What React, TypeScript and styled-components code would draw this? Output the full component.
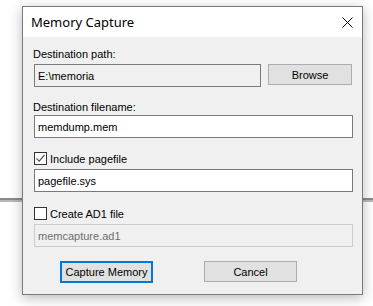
import React from "react";
import styled, { createGlobalStyle } from "styled-components";

const Global = createGlobalStyle`
  html, body { margin: 0; padding: 0; background: #ffffff; }
  body { font-family: "Liberation Sans", Arial, sans-serif; }
`;

const Page = styled.div`
  width: 373px;
  height: 306px;
  box-sizing: border-box;
  padding: 6px 0 0 22px;
  overflow: hidden;
  background: linear-gradient(
    to bottom,
    transparent 198px,
    #8a8a8a 198px,
    #8a8a8a 200px,
    #b9b9b9 200px,
    #b9b9b9 202px,
    transparent 202px
  );
`;

const Window = styled.div`
  width: 341px;
  height: 289px;
  box-sizing: border-box;
  border: 1px solid #7a7a7a;
  background: #f0f0f0;
  box-shadow: 0 3px 12px rgba(0, 0, 0, 0.28);
  display: flex;
  flex-direction: column;
`;

const TitleBar = styled.div`
  height: 30px;
  background: #ffffff;
  display: flex;
  align-items: center;
  justify-content: space-between;
  padding: 0 0 0 8px;
  font-family: "Noto Sans", "Liberation Sans", sans-serif;
  font-size: 13px;
  color: #000;
`;

const CloseBox = styled.div`
  width: 30px;
  height: 30px;
  display: flex;
  align-items: center;
  justify-content: center;
`;

const Body = styled.div`
  flex: 1;
  display: flex;
  flex-direction: column;
  padding: 10px 9px 0 11px;
  font-size: 11px;
  color: #000;
`;

const Label = styled.div<{ $mt?: number }>`
  height: 14px;
  line-height: 14px;
  margin-top: ${(p) => p.$mt ?? 0}px;
  margin-left: -1px;
`;

const Row = styled.div<{ $mt?: number }>`
  display: flex;
  align-items: flex-start;
  gap: 7px;
  margin-top: ${(p) => p.$mt ?? 0}px;
`;

const Field = styled.div<{ $variant?: "normal" | "readonly" | "disabled"; $width?: number }>`
  box-sizing: border-box;
  height: 23px;
  width: ${(p) => (p.$width ? `${p.$width}px` : "100%")};
  padding: 0 3px;
  display: flex;
  align-items: center;
  border: 1px solid
    ${(p) => (p.$variant === "disabled" ? "#cccccc" : "#7a7a7a")};
  background: ${(p) => (p.$variant === "normal" ? "#ffffff" : "#f0f0f0")};
  color: ${(p) => (p.$variant === "disabled" ? "#6d6d6d" : "#000")};
`;

const Button = styled.div<{ $default?: boolean; $width: number }>`
  box-sizing: border-box;
  width: ${(p) => p.$width}px;
  height: ${(p) => (p.$default ? 22 : 21)}px;
  display: flex;
  align-items: center;
  justify-content: center;
  background: #e1e1e1;
  border: ${(p) => (p.$default ? "2px solid #0078d7" : "1px solid #adadad")};
`;

const CheckRow = styled.div<{ $mt?: number }>`
  height: 15px;
  display: flex;
  align-items: center;
  gap: 3px;
  margin-top: ${(p) => p.$mt ?? 0}px;
`;

const Box = styled.div`
  box-sizing: border-box;
  width: 13px;
  height: 13px;
  border: 1px solid #333333;
  background: #ffffff;
  display: flex;
  align-items: center;
  justify-content: center;
`;

const ButtonRow = styled.div`
  display: flex;
  gap: 51px;
  padding-left: 26px;
  margin-top: 14px;
`;

const Check = ({ checked, label, mt }: { checked?: boolean; label: string; mt?: number }) => (
  <CheckRow $mt={mt}>
    <Box>
      {checked && (
        <svg width="11" height="11" viewBox="0 0 11 11">
          <path d="M1.5 5.5 L4.2 8.2 L9.5 2" fill="none" stroke="#555" strokeWidth="1.2" />
        </svg>
      )}
    </Box>
    <span>{label}</span>
  </CheckRow>
);

export default function App() {
  return (
    <>
      <Global />
      <Page>
        <Window>
          <TitleBar>
            <span>Memory Capture</span>
            <CloseBox>
              <svg width="11" height="11" viewBox="0 0 11 11">
                <path d="M0.5 0.5 L10.5 10.5 M10.5 0.5 L0.5 10.5" stroke="#000" strokeWidth="1" fill="none" />
              </svg>
            </CloseBox>
          </TitleBar>
          <Body>
            <Label>Destination path:</Label>
            <Row $mt={3}>
              <Field $variant="readonly" $width={227}>E:\memoria</Field>
              <Button $width={84}>Browse</Button>
            </Row>
            <Label $mt={13}>Destination filename:</Label>
            <Row $mt={1}>
              <Field $variant="normal">memdump.mem</Field>
            </Row>
            <Check checked label="Include pagefile" mt={13} />
            <Row $mt={3}>
              <Field $variant="normal">pagefile.sys</Field>
            </Row>
            <Check label="Create AD1 file" mt={14} />
            <Row $mt={3}>
              <Field $variant="disabled">memcapture.ad1</Field>
            </Row>
            <ButtonRow>
              <Button $default $width={93}>Capture Memory</Button>
              <Button $width={93}>Cancel</Button>
            </ButtonRow>
          </Body>
        </Window>
      </Page>
    </>
  );
}
